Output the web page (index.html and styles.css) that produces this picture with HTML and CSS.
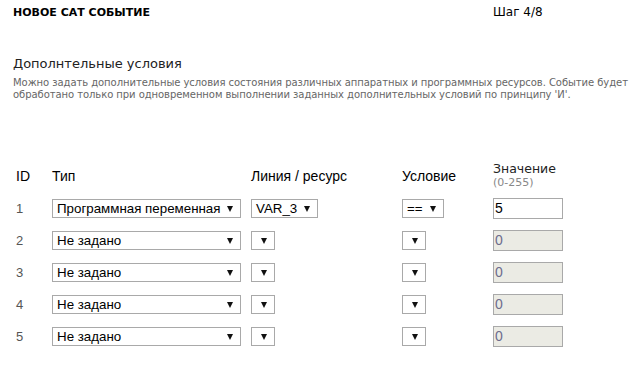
FILE: index.html
```html
<!DOCTYPE HTML>
<html>
<head>
  <meta charset="UTF-8">
  <link rel="stylesheet" href="styles.css">
</head>
<body>
  <div id="page">
    <div class="top">
      <div class="title">НОВОЕ САТ СОБЫТИЕ</div>
      <div class="step">Шаг 4/8</div>
    </div>
    <h3>Дополнтельные условия</h3>
    <p class="hint">Можно задать дополнительные условия состояния различных аппаратных и программных ресурсов. Событие будет обработано только при одновременном выполнении заданных дополнительных условий по принципу 'И'.</p>

    <table class="cond">
      <tr class="head">
        <td class="c-id">ID</td>
        <td class="c-type">Тип</td>
        <td class="c-res">Линия / ресурс</td>
        <td class="c-op">Условие</td>
        <td class="c-val">Значение<span class="range">(0-255)</span></td>
      </tr>
      <tr>
        <td class="num">1</td>
        <td><span class="sel wide">Программная переменная</span></td>
        <td><span class="sel">VAR_3</span></td>
        <td><span class="sel">==</span></td>
        <td><input type="text" value="5"></td>
      </tr>
      <tr>
        <td class="num">2</td>
        <td><span class="sel wide">Не задано</span></td>
        <td><span class="sel empty"></span></td>
        <td><span class="sel empty"></span></td>
        <td><input type="text" value="0" disabled></td>
      </tr>
      <tr>
        <td class="num">3</td>
        <td><span class="sel wide">Не задано</span></td>
        <td><span class="sel empty"></span></td>
        <td><span class="sel empty"></span></td>
        <td><input type="text" value="0" disabled></td>
      </tr>
      <tr>
        <td class="num">4</td>
        <td><span class="sel wide">Не задано</span></td>
        <td><span class="sel empty"></span></td>
        <td><span class="sel empty"></span></td>
        <td><input type="text" value="0" disabled></td>
      </tr>
      <tr>
        <td class="num">5</td>
        <td><span class="sel wide">Не задано</span></td>
        <td><span class="sel empty"></span></td>
        <td><span class="sel empty"></span></td>
        <td><input type="text" value="0" disabled></td>
      </tr>
    </table>
  </div>
</body>
</html>
```

FILE: styles.css
```css
body
{
  margin: 0;
  background: #fff;
  font-family: "DejaVu Sans", Verdana, sans-serif;
  color: #000;
}
#page
{
  padding: 6px 0 0 13px;
}
.top
{
  display: flex;
  height: 13px;
}
.title
{
  width: 480px;
  font-size: 11px;
  font-weight: bold;
  line-height: 13px;
}
.step
{
  font-size: 12px;
  line-height: 13px;
}
h3
{
  margin: 37px 0 0 0;
  font-size: 13px;
  font-weight: normal;
  line-height: 15px;
  color: #222;
}
.hint
{
  margin: 6px 0 0 0;
  font-size: 10px;
  line-height: 12px;
  letter-spacing: -0.06px;
  color: #666;
}
.cond
{
  margin: 58px 0 0 3px;
  border-collapse: collapse;
  font-family: "Liberation Sans", Arial, sans-serif;
  font-size: 14px;
}
.cond td
{
  padding: 0;
  height: 32px;
  vertical-align: middle;
}
.cond .head td
{
  height: 33px;
}
.c-id { width: 36px; }
.c-type { width: 199px; }
.c-res { width: 151px; }
.c-op { width: 91px; }
.c-val
{
  font-family: "DejaVu Sans", Verdana, sans-serif;
  font-size: 12.5px;
  line-height: 14px;
  color: #222;
}
.range
{
  display: block;
  font-size: 11px;
  line-height: 13px;
  color: #888;
}
.num
{
  font-size: 13px;
  color: #555;
}
.sel
{
  display: inline-flex;
  align-items: center;
  box-sizing: border-box;
  height: 19px;
  padding: 0 20px 0 4px;
  border: 1px solid #a9a9a9;
  font-size: 13.33px;
  color: #000;
  position: relative;
  vertical-align: middle;
  white-space: nowrap;
}
.sel::after
{
  content: "";
  position: absolute;
  right: 7px;
  top: 6px;
  border-left: 3.5px solid transparent;
  border-right: 3.5px solid transparent;
  border-top: 6px solid #111;
}
.sel.wide
{
  width: 189px;
}
.sel.empty
{
  width: 24px;
  padding: 0;
}
input
{
  box-sizing: border-box;
  width: 70px;
  height: 21px;
  margin: 0;
  padding: 0 1px;
  border: 1px solid #a9a9a9;
  font-family: "Liberation Sans", Arial, sans-serif;
  font-size: 14px;
  color: #000;
  background: #fff;
  vertical-align: middle;
}
input:disabled
{
  background: #ebebe4;
  color: #6d6d8d;
}
```
